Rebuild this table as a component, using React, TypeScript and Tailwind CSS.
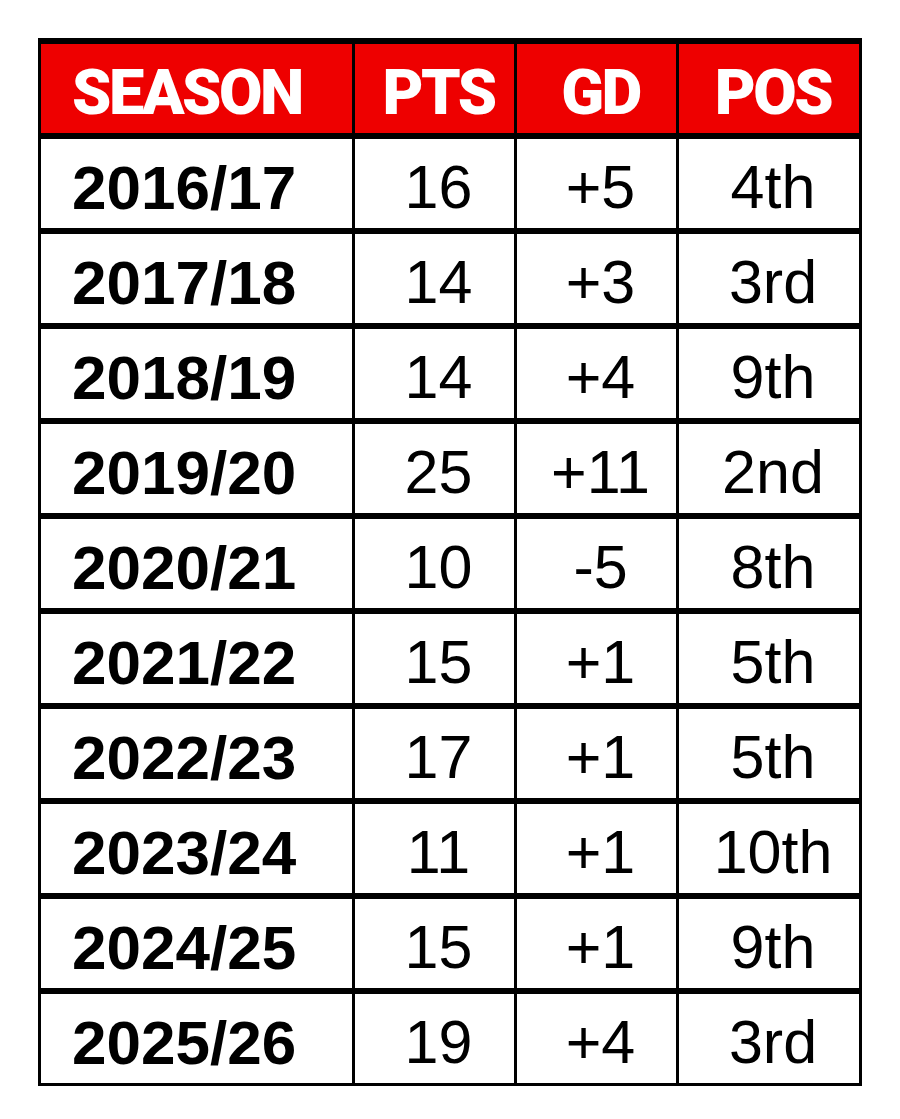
const rows = [
  ["2016/17", "16", "+5", "4th"],
  ["2017/18", "14", "+3", "3rd"],
  ["2018/19", "14", "+4", "9th"],
  ["2019/20", "25", "+11", "2nd"],
  ["2020/21", "10", "-5", "8th"],
  ["2021/22", "15", "+1", "5th"],
  ["2022/23", "17", "+1", "5th"],
  ["2023/24", "11", "+1", "10th"],
  ["2024/25", "15", "+1", "9th"],
  ["2025/26", "19", "+4", "3rd"],
];

const headCell = "bg-[#ee0000] text-white h-[89px] flex items-center pt-2";
const bodyCell = "bg-white text-black h-[89px] flex items-center pt-2";

const App = () => {
  return (
    <div className="w-[900px] h-[1119px] bg-white pt-[38px] pl-[38px]" style={{ fontFamily: '"Liberation Sans", Arial, sans-serif' }}>
      <div className="inline-grid grid-cols-[311px_159px_159px_180px] gap-x-[3px] gap-y-[6px] bg-black pt-[6px] pb-[3px] px-[3px]">
        <div className={`${headCell} pl-[31px]`} style={{ fontFamily: "Roboto, sans-serif" }}>
          <span className="text-[63px] font-black tracking-[-2.5px] leading-none">SEASON</span>
        </div>
        {["PTS", "GD", "POS"].map((h) => (
          <div key={h} className={`${headCell} justify-center pl-2`} style={{ fontFamily: "Roboto, sans-serif" }}>
            <span className="text-[63px] font-black tracking-[-2.5px] leading-none">{h}</span>
          </div>
        ))}
        {rows.map((r) => (
          <>
            <div key={r[0]} className={`${bodyCell} pl-[31px]`}>
              <span className="text-[62px] font-bold leading-none">{r[0]}</span>
            </div>
            <div className={`${bodyCell} justify-center pl-2`}>
              <span className="text-[61px] leading-none">{r[1]}</span>
            </div>
            <div className={`${bodyCell} justify-center pl-2`}>
              <span className="text-[61px] leading-none">{r[2]}</span>
            </div>
            <div className={`${bodyCell} justify-center pl-2`}>
              <span className="text-[61px] leading-none">{r[3]}</span>
            </div>
          </>
        ))}
      </div>
    </div>
  );
};

export default App;
